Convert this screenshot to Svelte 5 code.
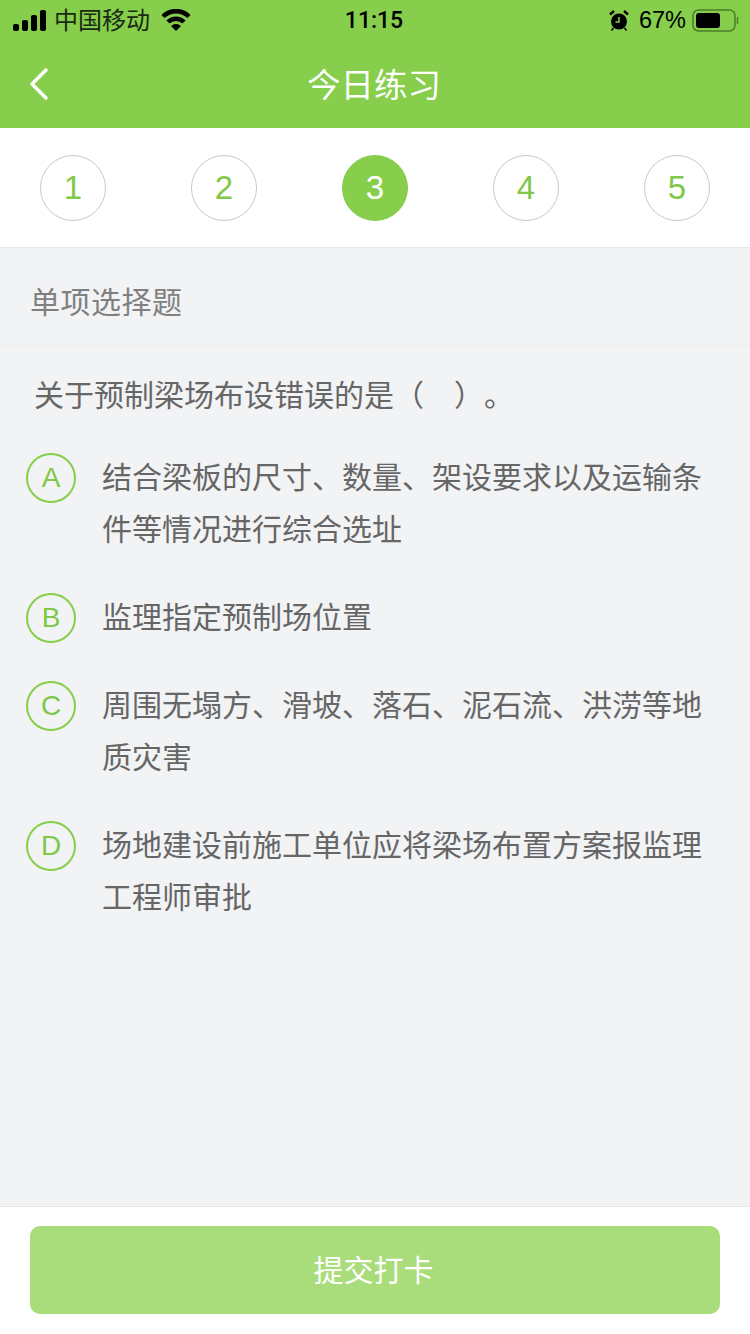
<script>
	const steps = [1, 2, 3, 4, 5];
	const current = 3;
	const options = [
		{ key: 'A', text: '结合梁板的尺寸、数量、架设要求以及运输条件等情况进行综合选址' },
		{ key: 'B', text: '监理指定预制场位置' },
		{ key: 'C', text: '周围无塌方、滑坡、落石、泥石流、洪涝等地质灾害' },
		{ key: 'D', text: '场地建设前施工单位应将梁场布置方案报监理工程师审批' },
	];
</script>

<div class="page">
	<header class="header">
		<div class="status">
			<div class="status-left">
				<svg class="signal" width="34" height="21" viewBox="0 0 34 21">
					<rect x="0" y="14" width="6" height="7" rx="2" />
					<rect x="9" y="10" width="6" height="11" rx="2" />
					<rect x="18" y="5" width="6" height="16" rx="2" />
					<rect x="27" y="0" width="6" height="21" rx="2" />
				</svg>
				<span class="carrier">中国移动</span>
				<svg class="wifi" width="30" height="22" viewBox="0 0 30 22">
					<path d="M2 7.500 A18.500 18.500 0 0 1 28 7.500" />
					<path d="M7 13 A11.500 11.500 0 0 1 23 13" />
					<path class="wifi-dot" d="M10 17 A7 7 0 0 1 20 17 L15 22 Z" />
				</svg>
			</div>
			<span class="time">11:15</span>
			<div class="status-right">
				<svg class="alarm" width="20" height="21" viewBox="0 0 20 21">
					<circle cx="10" cy="11.500" r="8" fill="#000" />
					<path d="M10 7 V12 H6.500" fill="none" stroke="#86ce4b" stroke-width="1.500" />
					<path d="M1 4.500 L5 1 M19 4.500 L15 1" stroke="#000" stroke-width="2.500" fill="none" />
					<path d="M4.500 18 L2.500 20.500 M15.500 18 L17.500 20.500" stroke="#000" stroke-width="1.500" fill="none" />
				</svg>
				<span class="percent">67%</span>
				<svg class="battery" width="47" height="23" viewBox="0 0 47 23">
					<rect x="1" y="1" width="42" height="21" rx="5.500" fill="none" stroke="#4c7f28" stroke-width="1.500" />
					<rect x="4" y="4" width="24" height="15" rx="3" fill="#000" />
					<path d="M45.500 8 V15" stroke="#4c7f28" stroke-width="1.500" fill="none" />
				</svg>
			</div>
		</div>
		<div class="nav">
			<svg class="back" width="20" height="34" viewBox="0 0 20 34">
				<path d="M17 3 L3 17 L17 31" />
			</svg>
			<h1 class="title">今日练习</h1>
		</div>
	</header>

	<div class="steps">
		{#each steps as step}
			<span class="step" class:active={step === current}>{step}</span>
		{/each}
	</div>

	<main class="content">
		<div class="section">单项选择题</div>
		<p class="question">关于预制梁场布设错误的是（<span class="blank"></span>）。</p>
		<ul class="options">
			{#each options as opt}
				<li class="option">
					<span class="badge">{opt.key}</span>
					<span class="option-text">{opt.text}</span>
				</li>
			{/each}
		</ul>
	</main>

	<footer class="footer">
		<button type="button" class="submit">提交打卡</button>
	</footer>
</div>

<style>
	:global(body) {
		margin: 0;
	}

	.page {
		height: 1334px;
		display: flex;
		flex-direction: column;
		background: #f2f3f5;
		font-family: "Noto Sans CJK SC", "Liberation Sans", sans-serif;
		text-spacing-trim: space-all;
	}

	/* header */

	.header {
		height: 128px;
		background: #86ce4b;
		flex-shrink: 0;
	}

	.status {
		height: 40px;
		display: grid;
		grid-template-columns: 1fr auto 1fr;
		align-items: center;
		color: #000;
	}

	.status-left {
		display: flex;
		align-items: center;
		padding-left: 13px;
	}

	.signal {
		fill: #000;
		margin-right: 7px;
	}

	.carrier {
		font-size: 24px;
		line-height: 40px;
		color: #1a2a10;
		margin-top: -2px;
	}

	.wifi {
		margin-left: 11px;
	}

	.wifi path {
		fill: none;
		stroke: #000;
		stroke-width: 4.500;
	}

	.wifi .wifi-dot {
		fill: #000;
		stroke: none;
	}

	.time {
		font-family: Roboto, "Liberation Sans", sans-serif;
		font-size: 23px;
		font-weight: 500;
		padding-right: 2px;
	}

	.status-right {
		display: flex;
		align-items: center;
		justify-content: flex-end;
		padding-right: 11px;
	}

	.percent {
		font-family: "Liberation Sans", sans-serif;
		font-size: 23.500px;
		margin: 0 6px 0 10px;
	}

	.nav {
		height: 88px;
		display: flex;
		align-items: center;
		justify-content: center;
		position: relative;
	}

	.back {
		position: absolute;
		left: 29px;
		top: 27px;
		fill: none;
		stroke: #fff;
		stroke-width: 3.500;
		stroke-linecap: round;
		stroke-linejoin: round;
	}

	.title {
		margin: 0 2px 2px 0;
		font-size: 33.500px;
		font-weight: 400;
		line-height: 44px;
		color: #fff;
	}

	/* step circles */

	.steps {
		height: 120px;
		flex-shrink: 0;
		box-sizing: border-box;
		padding: 27px 40px 0;
		display: flex;
		justify-content: space-between;
		align-items: flex-start;
		background: #fff;
		border-bottom: 1px solid #e9e9e9;
	}

	.step {
		width: 66px;
		height: 66px;
		box-sizing: border-box;
		border: 1px solid #c8c8c8;
		border-radius: 50%;
		display: flex;
		align-items: center;
		justify-content: center;
		font-family: "Liberation Sans", sans-serif;
		font-size: 33px;
		color: #7fc848;
	}

	.step.active {
		background: #86ce4b;
		border-color: #86ce4b;
		color: #fff;
	}

	/* question */

	.content {
		flex: 1;
		min-height: 0;
	}

	.section {
		height: 98px;
		box-sizing: border-box;
		padding-left: 30px;
		line-height: 104px;
		font-size: 30px;
		letter-spacing: 0.500px;
		color: #808080;
		border-bottom: 1px solid #ebebeb;
	}

	.question {
		margin: 0;
		padding: 21px 20px 0 34px;
		font-size: 30px;
		line-height: 52px;
		color: #666;
		white-space: nowrap;
	}

	.blank {
		display: inline-block;
		width: 30px;
	}

	.options {
		list-style: none;
		margin: 0;
		padding: 30px 30px 0 26px;
		display: flex;
		flex-direction: column;
		gap: 36px;
	}

	.option {
		display: flex;
		align-items: flex-start;
	}

	.badge {
		width: 50px;
		height: 50px;
		flex-shrink: 0;
		margin: 4px 26px -2px 0;
		box-sizing: border-box;
		border: 2px solid #86ce4b;
		border-radius: 50%;
		display: flex;
		align-items: center;
		justify-content: center;
		font-family: "Liberation Sans", sans-serif;
		font-size: 28px;
		color: #7fc848;
	}

	.option-text {
		font-size: 30px;
		line-height: 52px;
		color: #666;
	}

	/* footer */

	.footer {
		height: 128px;
		flex-shrink: 0;
		box-sizing: border-box;
		padding: 19px 30px 0;
		background: #fff;
		border-top: 1px solid #e6e6e8;
	}

	.submit {
		display: block;
		width: 100%;
		height: 88px;
		padding: 0 3px 4px 0;
		border: none;
		border-radius: 10px;
		background: #a9dc7a;
		color: #fff;
		font-family: inherit;
		font-size: 30px;
	}
</style>
